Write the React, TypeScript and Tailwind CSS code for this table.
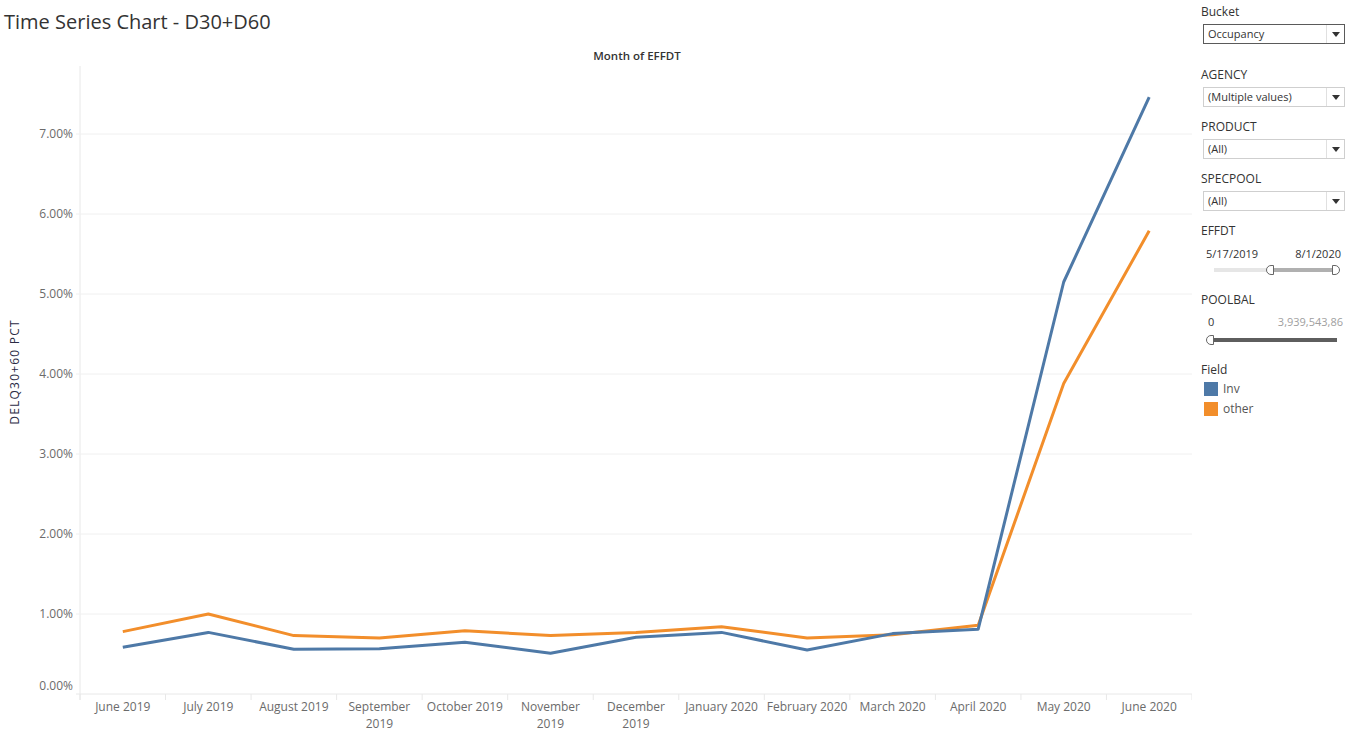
import React from "react";

const months: string[][] = [
  ["June 2019"],
  ["July 2019"],
  ["August 2019"],
  ["September", "2019"],
  ["October 2019"],
  ["November", "2019"],
  ["December", "2019"],
  ["January 2020"],
  ["February 2020"],
  ["March 2020"],
  ["April 2020"],
  ["May 2020"],
  ["June 2020"],
];
const inv = [0.585, 0.77, 0.56, 0.565, 0.646, 0.51, 0.71, 0.77, 0.55, 0.755, 0.81, 5.15, 7.46];
const other = [0.78, 1.0, 0.73, 0.7, 0.79, 0.73, 0.77, 0.84, 0.7, 0.74, 0.86, 3.88, 5.79];

const X0 = 80;
const X1 = 1192;
const BW = (X1 - X0) / 13;
const Y0 = 694;
const xAt = (i: number) => X0 + BW * (i + 0.5);
const yAt = (v: number) => Y0 - 80 * v;
const pts = (d: number[]) => d.map((v, i) => `${xAt(i).toFixed(1)},${yAt(v).toFixed(1)}`).join(" ");

const FONT = { fontFamily: '"Open Sans", "Noto Sans", sans-serif' };

function Chart() {
  return (
    <svg width={1192} height={702} viewBox="0 44 1192 702" className="block">
      <text x={637} y={60} textAnchor="middle" fontSize={11.5} fill="#333" fontWeight={600} style={FONT}>
        Month of EFFDT
      </text>
      <text
        transform="translate(19,372) rotate(-90)"
        textAnchor="middle"
        fontSize={12}
        letterSpacing={1.2}
        fill="#2b2b45"
        style={FONT}
      >
        DELQ30+60 PCT
      </text>
      <line x1={X0} y1={66} x2={X0} y2={Y0 + 6} stroke="#e8e8e8" strokeWidth={1} />
      <line x1={76} y1={Y0} x2={X1} y2={Y0} stroke="#e8e8e8" strokeWidth={1} />
      {[1, 2, 3, 4, 5, 6, 7].map((v) => (
        <line key={v} x1={76} y1={yAt(v)} x2={X1} y2={yAt(v)} stroke="#f0f0f0" strokeWidth={1} />
      ))}
      {Array.from({ length: 14 }).map((_, i) => (
        <line key={i} x1={X0 + BW * i} y1={Y0} x2={X0 + BW * i} y2={Y0 + 6} stroke="#e8e8e8" strokeWidth={1} />
      ))}
      {[0, 1, 2, 3, 4, 5, 6, 7].map((v) => (
        <text
          key={v}
          x={73}
          y={v === 0 ? 690 : yAt(v) + 4}
          textAnchor="end"
          fontSize={12}
          fill="#6b6b6b"
          style={FONT}
        >
          {v.toFixed(2)}%
        </text>
      ))}
      {months.map((m, i) => (
        <text key={i} x={xAt(i)} y={711} textAnchor="middle" fontSize={12} fill="#6b6b6b" style={FONT}>
          {m.map((line, j) => (
            <tspan key={j} x={xAt(i)} dy={j === 0 ? 0 : 17}>
              {line}
            </tspan>
          ))}
        </text>
      ))}
      <polyline points={pts(other)} fill="none" stroke="#f28e2b" strokeWidth={3} strokeLinejoin="round" />
      <polyline points={pts(inv)} fill="none" stroke="#4e79a7" strokeWidth={3} strokeLinejoin="round" />
    </svg>
  );
}

function Dropdown({ value, dark }: { value: string; dark?: boolean }) {
  return (
    <div
      className={`flex h-[20px] w-[142px] items-stretch border bg-white ${
        dark ? "border-[#5a5a5a]" : "border-[#cfcfcf]"
      }`}
    >
      <div className="flex flex-1 items-center pl-[4px] text-[11px] text-[#333]">{value}</div>
      <div className="flex w-[18px] items-center justify-center border-l border-[#e0e0e0]">
        <svg width="8" height="5" viewBox="0 0 8 5">
          <path d="M0 0 H8 L4 5 Z" fill="#333" />
        </svg>
      </div>
    </div>
  );
}

function Label({ children }: { children: React.ReactNode }) {
  return <div className="h-[16px] text-[12px] leading-[16px] font-medium text-[#333]">{children}</div>;
}

function Handle({ side }: { side: "l" | "r" }) {
  return (
    <div
      className={`absolute top-1/2 h-[10px] w-[8px] -translate-y-1/2 border border-[#666] bg-white ${
        side === "l" ? "rounded-l-full" : "rounded-r-full"
      }`}
    />
  );
}

export default function App() {
  return (
    <div className="flex h-[746px] w-[1354px] bg-white overflow-hidden" style={FONT}>
      <div className="flex w-[1192px] flex-col">
        <div className="flex h-[44px] items-center pl-[4px] text-[20px] text-[#333]">
          Time Series Chart - D30+D60
        </div>
        <Chart />
      </div>
      <div className="ml-[9px] flex w-[150px] flex-col pt-[4px]">
        <Label>Bucket</Label>
        <div className="mt-[4px] ml-[2px]">
          <Dropdown value="Occupancy" dark />
        </div>
        <div className="mt-[23px]">
          <Label>AGENCY</Label>
        </div>
        <div className="mt-[4px] ml-[2px]">
          <Dropdown value="(Multiple values)" />
        </div>
        <div className="mt-[12px]">
          <Label>PRODUCT</Label>
        </div>
        <div className="mt-[4px] ml-[2px]">
          <Dropdown value="(All)" />
        </div>
        <div className="mt-[12px]">
          <Label>SPECPOOL</Label>
        </div>
        <div className="mt-[4px] ml-[2px]">
          <Dropdown value="(All)" />
        </div>
        <div className="mt-[12px]">
          <Label>EFFDT</Label>
        </div>
        <div className="mt-[8px] flex justify-between pl-[5px] pr-[10px] text-[11px] leading-[14px] text-[#333]">
          <span>5/17/2019</span>
          <span>8/1/2020</span>
        </div>
        <div className="relative mt-[3px] ml-[13px] h-[12px] w-[122px]">
          <div className="absolute top-1/2 left-0 h-[4px] w-[56px] -translate-y-1/2 bg-[#e6e6e6]" />
          <div className="absolute top-1/2 left-[56px] h-[4px] w-[66px] -translate-y-1/2 bg-[#b0b0b0]" />
          <div className="absolute top-0 left-[52px] h-[12px] w-[8px]">
            <Handle side="l" />
          </div>
          <div className="absolute top-0 left-[118px] h-[12px] w-[8px]">
            <Handle side="r" />
          </div>
        </div>
        <div className="mt-[16px]">
          <Label>POOLBAL</Label>
        </div>
        <div className="mt-[7px] flex justify-between pl-[7px] pr-[8px] text-[11px] leading-[14px]">
          <span className="text-[#333]">0</span>
          <span className="text-[#a0a0a0]">3,939,543,86</span>
        </div>
        <div className="relative mt-[5px] ml-[5px] h-[12px] w-[131px]">
          <div className="absolute top-1/2 left-[4px] h-[4px] w-[127px] -translate-y-1/2 bg-[#5e5e5e]" />
          <div className="absolute top-0 left-0 h-[12px] w-[8px]">
            <Handle side="l" />
          </div>
        </div>
        <div className="mt-[16px]">
          <Label>Field</Label>
        </div>
        <div className="mt-[3px] flex h-[16px] items-center gap-[5px] pl-[3px] text-[12px] leading-[16px] text-[#555]">
          <div className="h-[14px] w-[14px] bg-[#4e79a7]" />
          <span>Inv</span>
        </div>
        <div className="mt-[4px] flex h-[16px] items-center gap-[5px] pl-[3px] text-[12px] leading-[16px] text-[#555]">
          <div className="h-[14px] w-[14px] bg-[#f28e2b]" />
          <span>other</span>
        </div>
      </div>
    </div>
  );
}
